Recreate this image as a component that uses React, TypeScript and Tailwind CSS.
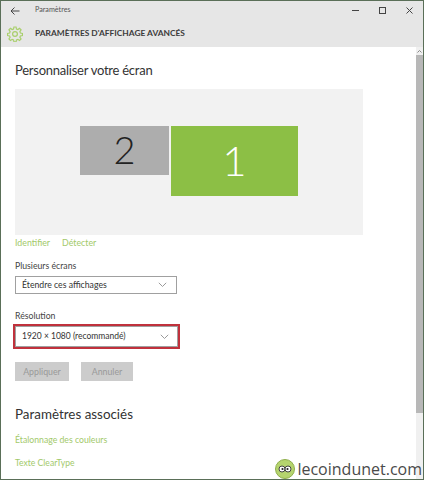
const font = { fontFamily: 'Lato, "Open Sans", sans-serif' };

function Chevron() {
  return (
    <svg width="9" height="6" viewBox="0 0 9 6" className="shrink-0">
      <path d="M.8.8L4.5 4.5 8.2.8" fill="none" stroke="#9a9a9a" strokeWidth="1" />
    </svg>
  );
}

function Gear() {
  return (
    <svg width="16" height="16" viewBox="0 0 24 24" fill="none" stroke="#a9cf6c" strokeWidth="1.8" className="shrink-0">
      <circle cx="12" cy="12" r="3.6" />
      <path d="M10.4 1.5h3.2l.6 3.1 2 .8 2.6-1.8 2.3 2.3-1.8 2.6.8 2 3.1.6v3.2l-3.1.6-.8 2 1.8 2.6-2.3 2.3-2.6-1.8-2 .8-.6 3.1h-3.2l-.6-3.1-2-.8-2.6 1.8-2.3-2.3 1.8-2.6-.8-2-3.1-.6v-3.2l3.1-.6.8-2-1.8-2.6 2.3-2.3 2.6 1.8 2-.8z" />
    </svg>
  );
}

export default function App() {
  return (
    <div className="relative w-[424px] h-[480px] overflow-hidden bg-[#5a6f58] p-px flex flex-col" style={font}>
      <div className="flex-1 min-h-0 bg-white flex flex-col overflow-hidden">
        <div className="h-[46px] shrink-0 bg-[#e6e6e6] flex flex-col">
          <div className="h-[19px] flex items-center">
            <svg width="10" height="10" viewBox="0 0 10 10" className="ml-[9px]">
              <path d="M9.5 5H1M4.5 1.5L1 5l3.5 3.5" fill="none" stroke="#444" strokeWidth="1" />
            </svg>
            <span className="ml-[15px] text-[7.2px] text-[#555]">Paramètres</span>
            <div className="ml-auto mr-[10px] flex items-center gap-[20px]">
              <svg width="7" height="7" viewBox="0 0 7 7"><path d="M0 3.5h7" stroke="#444" /></svg>
              <svg width="7" height="7" viewBox="0 0 7 7"><rect x=".5" y=".5" width="6" height="6" fill="none" stroke="#444" /></svg>
              <svg width="7" height="7" viewBox="0 0 7 7"><path d="M.5.5l6 6M6.5.5l-6 6" stroke="#444" /></svg>
            </div>
          </div>
          <div className="flex items-center h-[27px]">
            <div className="ml-[6px]"><Gear /></div>
            <span className="ml-[12px] text-[8.4px] font-bold text-[#3c3c3c]">PARAMÈTRES D'AFFICHAGE AVANCÉS</span>
          </div>
        </div>
        <div className="flex-1 min-h-0 flex">
          <div className="flex-1 min-w-0 pl-[14px] pt-[13px]">
            <h1 className="text-[13px] tracking-[-0.25px] leading-[20px] text-[#333] font-normal">Personnaliser votre écran</h1>
            <div className="mt-[9px] w-[348px] h-[146px] bg-[#f2f2f2] flex justify-center items-start pt-[37px] gap-[2px]">
              <div className="w-[89px] h-[49px] pb-[3px] bg-[#adadad] flex items-center justify-center text-[38px] font-light leading-none text-[#222]">2</div>
              <div className="w-[127px] h-[70px] pb-[3px] bg-[#8cbf45] flex items-center justify-center text-[42px] font-light leading-none text-white">1</div>
            </div>
            <div className="mt-px flex gap-[12px] text-[8.8px] leading-[14px] text-[#a2c96a]">
              <span>Identifier</span>
              <span>Détecter</span>
            </div>
            <div className="mt-[9px] text-[8.7px] leading-[14px] text-[#444]">Plusieurs écrans</div>
            <div className="mt-[3px] w-[162px] h-[18px] border border-[#a0a0a0] flex items-center justify-between pl-[6px] pr-[9px] text-[8.7px] text-[#333]">
              <span>Étendre ces affichages</span>
              <Chevron />
            </div>
            <div className="mt-[15px] text-[8.7px] leading-[14px] text-[#444]">Résolution</div>
            <div className="mt-px -ml-[2px] w-[167px] h-[25px] border-2 border-[#c0313c]">
              <div className="h-full border border-[#a0a0a0] flex items-center justify-between pl-[6px] pr-[8px] text-[8.5px] text-[#333]">
                <span>1920 × 1080 (recommandé)</span>
                <Chevron />
              </div>
            </div>
            <div className="mt-[13px] flex gap-[12px]">
              <div className="w-[54px] h-[19px] bg-[#cccccc] flex items-center justify-center text-[8.8px] text-[#999]">Appliquer</div>
              <div className="w-[52px] h-[19px] bg-[#cccccc] flex items-center justify-center text-[8.8px] text-[#999]">Annuler</div>
            </div>
            <h2 className="mt-[24px] text-[13.4px] leading-[18px] text-[#333] font-normal">Paramètres associés</h2>
            <div className="mt-[10px] text-[8.7px] leading-[14px] text-[#a2c96a]">Étalonnage des couleurs</div>
            <div className="mt-[9px] text-[8.6px] leading-[14px] text-[#a2c96a]">Texte ClearType</div>
          </div>
          <div className="w-[7px] shrink-0 bg-[#f0f0f0] flex flex-col items-center">
            <div className="h-[8px] w-full flex items-center justify-center">
              <svg width="5" height="3" viewBox="0 0 5 3"><path d="M.5 2.5L2.5.5l2 2" fill="none" stroke="#888" /></svg>
            </div>
            <div className="w-full h-[358px] bg-[#b8b8b8]" />
          </div>
        </div>
      </div>
      <div className="absolute right-0 bottom-0 flex items-end">
        <svg width="20" height="22" viewBox="0 0 20 22" className="mr-[2px]">
          <circle cx="10" cy="11" r="9.5" fill="#b5d46e" stroke="#8fae4c" />
          <circle cx="7" cy="11" r="3" fill="#fff" stroke="#444" />
          <circle cx="13" cy="11" r="3" fill="#fff" stroke="#444" />
          <circle cx="7.5" cy="11" r="1.1" fill="#222" />
          <circle cx="12.5" cy="11" r="1.1" fill="#222" />
        </svg>
        <span className="text-[16px] leading-[22px] pr-[2px] text-[#4a4a4a]" style={{ fontFamily: '"Open Sans", sans-serif' }}>lecoindunet.com</span>
      </div>
    </div>
  );
}
